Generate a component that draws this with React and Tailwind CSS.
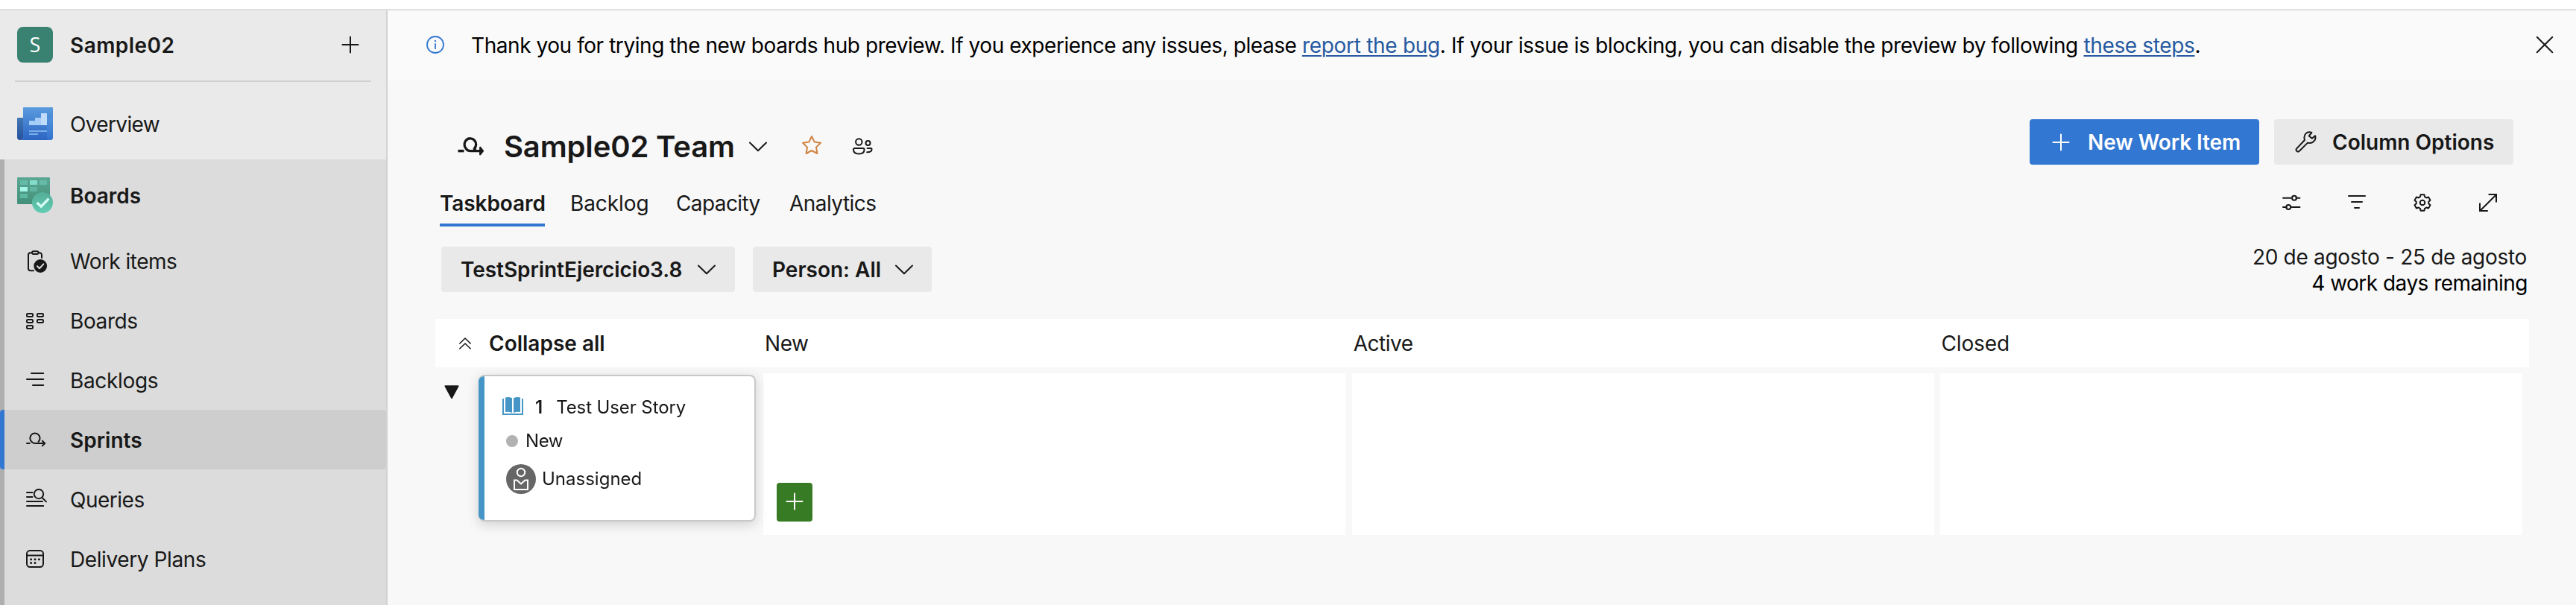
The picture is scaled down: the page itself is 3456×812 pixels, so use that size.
const navItems = [
  { label: "Work items", tracking: "tracking-[-0.53px]", icon: "workItems" },
  { label: "Boards", tracking: "tracking-[-0.4px]", icon: "boards" },
  { label: "Backlogs", tracking: "tracking-[-0.35px]", icon: "backlogs" },
  { label: "Sprints", tracking: "tracking-normal", icon: "sprints", active: true },
  { label: "Queries", tracking: "tracking-[-0.5px]", icon: "queries" },
  { label: "Delivery Plans", tracking: "tracking-[-0.4px]", icon: "plans" },
];

const navGlyphs = {
  workItems: (
    <>
      <path d="M33 20V16.5A3 3 0 0 0 30 13.2H18A3 3 0 0 0 15 16.2V34.2A3 3 0 0 0 18 37.2H22" />
      <rect x="20" y="11.2" width="8.6" height="3.8" rx="1.9" fill="#dcdcdc" />
      <circle cx="31.2" cy="31" r="8.9" fill="#181818" stroke="none" />
      <path d="M27 31.2L30 34.2L35.4 28.4" stroke="#dcdcdc" />
    </>
  ),
  boards: (
    <>
      <rect x="13" y="15" width="8" height="4" rx="1.2" />
      <rect x="13" y="23" width="8" height="4" rx="1.2" />
      <rect x="13" y="31" width="8" height="4" rx="1.2" />
      <rect x="27" y="15" width="8" height="4" rx="1.2" />
      <rect x="27" y="23" width="8" height="4" rx="1.2" />
    </>
  ),
  backlogs: <path d="M19 15H35.2M13 23H35.2M21 31H35.2" />,
  sprints: (
    <path d="M13 29H16.8M28.6 26.8A6.6 6.6 0 1 0 20 27.4Q21.6 29 24 29H37M33.8 25.6L37.2 29L33.8 32.4" />
  ),
  queries: (
    <>
      <path d="M13 15H20.5M13 21H20.5M13 27H34M13 33H35.2M33.6 22L39 27.4" />
      <circle cx="29" cy="17" r="6.2" />
    </>
  ),
  plans: (
    <>
      <rect x="13" y="13" width="22" height="22" rx="4.2" />
      <path d="M13 19.4H35" />
      <g fill="#181818" stroke="none">
        <circle cx="18.6" cy="24.8" r="1.5" />
        <circle cx="24" cy="24.8" r="1.5" />
        <circle cx="29.4" cy="24.8" r="1.5" />
        <circle cx="18.6" cy="29.6" r="1.5" />
        <circle cx="24" cy="29.6" r="1.5" />
      </g>
    </>
  ),
};

function Icon({ w = 24, h = 24, className = "", sw = 2, children }) {
  return (
    <svg
      width={w}
      height={h}
      viewBox={`0 0 ${w} ${h}`}
      fill="none"
      stroke="currentColor"
      strokeWidth={sw}
      strokeLinecap="round"
      strokeLinejoin="round"
      className={`shrink-0 ${className}`}
    >
      {children}
    </svg>
  );
}

function Chevron({ className }) {
  return (
    <Icon w={26} h={14} className={className}>
      <path d="M2 1.5L13 12.3L24 1.5" />
    </Icon>
  );
}

function OverviewIcon() {
  return (
    <Icon w={48} h={48}>
      <defs>
        <linearGradient id="ovFront" x1="0" y1="0" x2="0" y2="1">
          <stop offset="0" stopColor="#5a9bde" />
          <stop offset="1" stopColor="#2c65c3" />
        </linearGradient>
        <linearGradient id="ovBack" x1="0" y1="0" x2="0" y2="1">
          <stop offset="0" stopColor="#4377b4" />
          <stop offset="1" stopColor="#25529c" />
        </linearGradient>
        <linearGradient id="ovCurl" x1="0" y1="0" x2="0" y2="1">
          <stop offset="0" stopColor="#5090db" />
          <stop offset="1" stopColor="#3474d0" />
        </linearGradient>
      </defs>
      <g stroke="none">
        <path d="M0 17a1 1 0 0 1 1-1H8V42a4 4 0 0 1-8 0Z" fill="url(#ovBack)" />
        <path d="M8 3a1 1 0 0 1 1-1H47a1 1 0 0 1 1 1V42a4 4 0 0 1-4 4H4a4 4 0 0 0 4-4Z" fill="url(#ovFront)" />
        <path d="M40 16H48V42a4 4 0 0 1-4 4a4 4 0 0 1-4-4Z" fill="url(#ovCurl)" />
        <path d="M16 20H24V16H32V26H16Z" fill="#a5cdf8" />
        <rect x="32" y="10" width="8" height="16" fill="#c0dcfb" />
        <rect x="16" y="33" width="24" height="2" fill="#79aeea" />
        <rect x="16" y="37" width="12" height="2" fill="#79aeea" />
      </g>
    </Icon>
  );
}

function BoardsIcon() {
  return (
    <Icon w={48} h={48}>
      <defs>
        <linearGradient id="bdBack" x1="0" y1="0" x2="0" y2="1">
          <stop offset="0" stopColor="#5ba794" />
          <stop offset="1" stopColor="#429079" />
        </linearGradient>
        <linearGradient id="bdDot" x1="0" y1="0" x2="0" y2="1">
          <stop offset="0" stopColor="#55ad99" />
          <stop offset="1" stopColor="#62cdb4" />
        </linearGradient>
      </defs>
      <g stroke="none">
        <rect width="44" height="36" rx="1.2" fill="url(#bdBack)" />
        <rect x="4" y="4" width="10" height="6" fill="#65bba8" />
        <rect x="17" y="4" width="10" height="6" fill="#84dccb" />
        <rect x="30" y="4" width="10" height="6" fill="#65bba8" />
        <rect x="4" y="13" width="10" height="6" fill="#a5f6e8" />
        <rect x="17" y="13" width="10" height="6" fill="#5fb5a0" />
        <rect x="4" y="22" width="10" height="6" fill="#5bb8a2" />
        <circle cx="34" cy="34" r="14" fill="url(#bdDot)" />
      </g>
      <path d="M26.6 34L32.2 39.2L42.4 28.6" stroke="#d5fcf5" strokeWidth="3.4" strokeLinecap="butt" strokeLinejoin="miter" />
    </Icon>
  );
}

// Six-toothed outline, one tooth pointing straight up.
const gearPoints = Array.from({ length: 6 }, (_, k) =>
  [
    [-21, 8.4],
    [-13, 11],
    [13, 11],
    [21, 8.4],
  ].map(([offset, radius]) => {
    const a = ((k * 60 - 90 + offset) * Math.PI) / 180;
    return `${(13 + radius * Math.cos(a)).toFixed(2)},${(13 + radius * Math.sin(a)).toFixed(2)}`;
  }),
)
  .flat()
  .join(" ");

function Sidebar() {
  return (
    <aside className="flex h-[798px] w-[520px] shrink-0 flex-col border-r-2 border-[#d2d2d2] bg-[#eaeaea]">
      <div className="ml-5 mr-5 flex h-24 items-center border-b-2 border-[#d0d0d0] pl-[3px] pr-4">
        <div className="mb-[2px] flex h-12 w-12 items-center justify-center rounded-lg bg-[#398272] font-['Open_Sans'] text-[27px] text-white">
          S
        </div>
        <div className="ml-[23px] flex-1 text-[28px] font-semibold leading-[94px] tracking-[0.45px]">Sample02</div>
        <Icon w={24} h={24} className="mb-[3px]">
          <path d="M12 1.5V22.5M1.5 12H22.5" />
        </Icon>
      </div>
      <div className="flex h-26 items-center pl-[23px] pt-[8px]">
        <OverviewIcon />
        <div className="ml-[23px] pt-[2px] text-[28px] tracking-[-0.65px]">Overview</div>
      </div>
      <div className="relative flex-1 overflow-hidden bg-[#dcdcdc]">
        <div className="absolute inset-y-0 left-0 w-1.5 bg-[#afafaf]" />
        <div className="flex h-24 items-center pl-[23px]">
          <BoardsIcon />
          <div className="ml-[23px] pt-[2px] text-[28px] font-semibold">Boards</div>
        </div>
        {navItems.map((item) => (
          <div
            key={item.label}
            className={`relative flex h-20 items-center overflow-hidden pl-[23px] ${item.active ? "rounded-[4px] bg-[#cecece] font-semibold" : ""}`}
          >
            {item.active && <div className="absolute inset-y-0 left-0 w-1.5 bg-[#3277d1]" />}
            <Icon w={48} h={48}>
              {navGlyphs[item.icon]}
            </Icon>
            <div className={`ml-[23px] pt-[2px] text-[28px] ${item.tracking}`}>{item.label}</div>
          </div>
        ))}
      </div>
    </aside>
  );
}

function Banner() {
  return (
    <div className="flex h-[94px] items-center bg-[#fafafa] pl-[52px] pr-[30px] text-[28px] text-black">
      <Icon className="mt-[-2px] text-[#3277d1]" sw={1.8}>
        <circle cx="12" cy="12" r="11" />
        <path d="M12 10.8V17.2" />
        <circle cx="12" cy="7" r="0.6" fill="currentColor" strokeWidth="1.2" />
      </Icon>
      <p className="ml-9 flex-1 whitespace-nowrap tracking-[-0.36px]">
        <span className="tracking-[-0.44px]">
          Thank you for trying the new boards hub preview. If you experience any issues, please{" "}
        </span>
        <a className="tracking-[-0.3px] text-[#2659a0] underline decoration-2 underline-offset-[3px]">report the bug</a>. If your issue is
        blocking, you can disable the preview by following{" "}
        <a className="text-[#2659a0] underline decoration-2 underline-offset-[3px]">these steps</a>.
      </p>
      <Icon className="mt-[-2px] text-[#181818]">
        <path d="M1.7 1.7L22.3 22.3M22.3 1.7L1.7 22.3" />
      </Icon>
    </div>
  );
}

function TitleRow() {
  return (
    <div className="flex h-[82px] items-start justify-between">
      <div className="flex h-[73px] items-center">
        <Icon w={38} h={28} sw={3.5} className="ml-[29px]">
          <g strokeLinecap="butt">
            <path d="M1.5 19.6H9.5" />
            <path d="M21.8 17.2H24.4L23.4 16.4A7.8 8 0 1 0 11.8 15.8Q14 19.6 18.4 19.6H34" strokeWidth="3.3" />
            <path d="M31.2 14.8L35 19.6L31.2 24.4Z" fill="currentColor" strokeWidth="2.2" />
          </g>
        </Icon>
        <h1 className="ml-[25px] whitespace-nowrap text-[40px] font-semibold leading-[73px] tracking-[-0.15px]">
          Sample02 Team
        </h1>
        <Chevron className="ml-[18px]" />
        <Icon w={28} h={28} className="ml-[45px] mt-[-4px] text-[#d08442]">
          <path d="M14 2L17.7 9.6L26 10.8L20 16.6L21.4 25L14 21L6.6 25L8 16.6L2 10.8L10.3 9.6Z" />
        </Icon>
        <Icon w={28} h={24} className="ml-[40px]">
          <circle cx="9.3" cy="5.5" r="4.2" />
          <circle cx="21.5" cy="7" r="3" />
          <path d="M3.6 14H15a1.6 1.6 0 0 1 1.6 1.6C16.6 19.6 13.4 21.6 9.3 21.6S2 19.6 2 15.6A1.6 1.6 0 0 1 3.6 14Z" />
          <path d="M20.6 14H25a1.6 1.6 0 0 1 1.6 1.6C26.6 18.2 24 19.4 20.2 19.2" />
        </Icon>
      </div>
      <div className="mr-[21px] flex gap-5">
        <button className="flex h-[61px] w-[308px] items-center rounded-[4px] bg-[#3277d1] pl-[30px] text-[28px] font-semibold tracking-[-0.08px] text-white">
          <Icon>
            <path d="M12 1.5V22.5M1.5 12H22.5" />
          </Icon>
          <span className="ml-[24px] whitespace-nowrap">New Work Item</span>
        </button>
        <button className="flex h-[61px] w-[321px] items-center rounded-[4px] bg-[#e9e9e9] pl-[28px] text-[28px] font-semibold">
          <Icon w={30} h={30}>
            <path d="M2 23.6Q0.8 25.2 2.4 26.8Q4 28.4 5.8 26.8L17 15.6C20 16.4 22.6 16.2 25 14C27.4 11.8 28 9 27 6.2L22.8 9.8L18.8 6.4L22.4 2C20 1 16.6 1.2 14.4 3.4C12.2 5.8 12 8.8 13 12Z" />
          </Icon>
          <span className="ml-[20px] whitespace-nowrap">Column Options</span>
        </button>
      </div>
    </div>
  );
}

function TabsRow() {
  return (
    <div className="flex h-[62px] justify-between">
      <nav className="ml-[6px] flex text-[28px] leading-[54px]">
        <div className="w-[141px] border-b-4 border-[#3277d1] pt-1 font-semibold tracking-[-0.1px]">Taskboard</div>
        <div className="ml-[34px] w-[142px] pt-1 tracking-[-0.1px]">Backlog</div>
        <div className="w-[152px] pt-1 tracking-[-0.6px]">Capacity</div>
        <div className="pt-1 tracking-[-0.55px]">Analytics</div>
      </nav>
      <div className="mr-[42px] flex h-[60px] items-center gap-[62px]">
        <Icon w={26} h={26}>
          <path d="M2 6.7H12.8M19.4 6.7H24.4M2 18.9H6.8M13.4 18.9H24.4" />
          <circle cx="17" cy="6.7" r="3" />
          <circle cx="9.2" cy="18.9" r="3" />
        </Icon>
        <Icon w={26} h={26}>
          <path d="M2 4H24M6 12H20M10 20H16" />
        </Icon>
        <Icon w={26} h={26}>
          <polygon points={gearPoints} />
          <circle cx="13" cy="13" r="3.3" />
        </Icon>
        <Icon w={26} h={26}>
          <path d="M2.2 24L24 2.2M13.6 2H24V12.6M2 13.6V24H12.8" strokeLinecap="butt" strokeLinejoin="miter" />
        </Icon>
      </div>
    </div>
  );
}

function FilterRow() {
  return (
    <div className="mt-[24px] flex h-[70px] justify-between">
      <div className="ml-2 mt-[3px] flex gap-6 text-[28px] font-semibold">
        <button className="flex h-[61px] w-[394px] items-center rounded-[4px] bg-[#e9e9e9] pl-[26px]">
          <span className="tracking-[-0.06px]">TestSprintEjercicio3.8</span>
          <Chevron className="ml-5" />
        </button>
        <button className="flex h-[61px] w-[240px] items-center rounded-[4px] bg-[#e9e9e9] pl-[26px]">
          <span>Person: All</span>
          <Chevron className="ml-[18px]" />
        </button>
      </div>
      <div className="mr-[2px] text-right text-[28px] leading-[35px]">
        <div className="pr-[1px] tracking-[-0.3px]">20 de agosto - 25 de agosto</div>
        <div className="tracking-[-0.52px] text-black">4 work days remaining</div>
      </div>
    </div>
  );
}

function StoryCard() {
  return (
    <div className="ml-[26px] mt-[2px] flex h-[197px] w-[372px] overflow-hidden rounded-lg border-y-2 border-r-2 border-[#c8c8c8] bg-white text-[24px]">
      <div className="my-[-2px] w-2 shrink-0 bg-[#4596c6]" />
      <div className="flex flex-col pl-6">
        <div className="mt-[24px] flex h-9 items-center">
          <Icon w={28} h={24} className="mt-[-4px] text-[#4596c6]">
            <g fill="currentColor" stroke="none">
              <path d="M0 2H2V22H12V24H0Z" />
              <path d="M28 2H26V22H16V24H28Z" />
              <path d="M4 0.6Q8.5-0.6 13 1.2V21Q8.5 19.2 4 20Z" />
              <path d="M24 0.6Q19.5-0.6 15 1.2V21Q19.5 19.2 24 20Z" />
              <path d="M10 22H18V24H10Z" />
            </g>
          </Icon>
          <span className="ml-4 font-semibold">1</span>
          <span className="ml-[18px] whitespace-nowrap tracking-[-0.1px]">Test User Story</span>
        </div>
        <div className="mt-[11px] flex h-8 items-center pl-[5px]">
          <div className="h-4 w-4 rounded-full bg-[#b2b2b2]" />
          <span className="ml-[10px] tracking-[-0.4px]">New</span>
        </div>
        <div className="mt-[15px] flex h-10 items-center pl-[5px]">
          <Icon w={40} h={40}>
            <circle cx="20" cy="20" r="20" fill="#666666" stroke="none" />
            <g stroke="#ffffff" strokeLinecap="butt" strokeLinejoin="miter">
              <circle cx="20" cy="11" r="5.2" />
              <path d="M11 21.4H14.6L20 26.4L25.4 21.4H29V34H11Z" />
            </g>
          </Icon>
          <span className="ml-[8px]">Unassigned</span>
        </div>
      </div>
    </div>
  );
}

function Board() {
  return (
    <div className="mt-[30px] text-[28px]">
      <div className="grid h-[65px] w-[2809px] grid-cols-[440px_789.7px_789.7px_1fr] items-center bg-white">
        <div className="flex items-center font-semibold">
          <Icon w={18} h={18} sw={1.6} className="ml-[31px]">
            <path d="M1.8 9L9 2L16.2 9M1.8 16L9 9L16.2 16" />
          </Icon>
          <span className="ml-[23px]">Collapse all</span>
        </div>
        <div className="pl-[2px] tracking-[-0.4px]">New</div>
        <div className="pl-[2px] tracking-[-0.5px]">Active</div>
        <div className="pl-px tracking-[-0.1px]">Closed</div>
      </div>
      <div className="mt-2 grid h-[217px] grid-cols-[440px_789.7px_789.7px_781px]">
        <div className="flex items-start">
          <Icon w={20} h={20} sw={2} className="ml-[12px] mt-[15px]">
            <path d="M1.5 2.2H18.5L10 18Z" fill="currentColor" />
          </Icon>
          <div className="rounded-lg [filter:drop-shadow(0_4px_8px_rgba(0,0,0,0.16))]">
            <StoryCard />
          </div>
        </div>
        <div className="w-[781px] bg-white pl-[18px] pt-[147px]">
          <button className="flex h-[52px] w-12 items-center justify-center rounded-[4px] bg-[#387b25] text-white">
            <Icon className="mt-[-2px]">
              <path d="M12 1.5V22.5M1.5 12H22.5" />
            </Icon>
          </button>
        </div>
        <div className="w-[781px] bg-white" />
        <div className="bg-white" />
      </div>
    </div>
  );
}

export default function App() {
  return (
    <div className="h-[812px] w-[3456px] overflow-hidden bg-white pt-3 font-['Inter',sans-serif] text-[#181818]">
      <div className="flex border-t-2 border-[#dfdfdf]">
        <Sidebar />
        <main className="h-[798px] flex-1 bg-[#f8f8f8]">
          <Banner />
          <div className="ml-16 mr-[63px] pt-[52px]">
            <TitleRow />
            <TabsRow />
            <FilterRow />
            <Board />
          </div>
        </main>
      </div>
    </div>
  );
}
